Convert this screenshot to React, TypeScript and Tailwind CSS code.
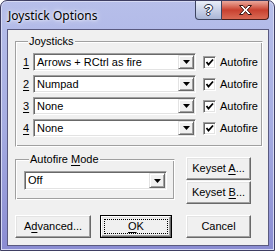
import React from 'react';

const font = "font-['Liberation_Sans',Arial,sans-serif] text-[11px] leading-[13px] text-black";

function U({ children }: { children: React.ReactNode }) {
  return <span className="underline underline-offset-[2px]">{children}</span>;
}

function Arrow() {
  return (
    <svg width="7" height="4" viewBox="0 0 7 4">
      <polygon points="0,0 7,0 3.5,4" fill="black" />
    </svg>
  );
}

function Combo({ value, width, height }: { value: string; width: string; height: string }) {
  return (
    <div
      className={`${width} ${height} flex bg-white border border-t-[#a0a0a0] border-l-[#a0a0a0] border-r-white border-b-white shadow-[inset_1px_1px_0_#696969,inset_-1px_-1px_0_#e3e3e3] p-[1px]`}
    >
      <div className="flex-1 pl-[2px] flex items-center whitespace-nowrap overflow-hidden">{value}</div>
      <div className="w-[16px] bg-[#f0f0f0] flex items-center justify-center border border-t-[#e3e3e3] border-l-[#e3e3e3] border-r-[#696969] border-b-[#696969] shadow-[inset_1px_1px_0_white,inset_-1px_-1px_0_#a0a0a0]">
        <Arrow />
      </div>
    </div>
  );
}

function Check() {
  return (
    <div className="w-[13px] h-[13px] bg-white border border-t-[#a0a0a0] border-l-[#a0a0a0] border-r-white border-b-white shadow-[inset_1px_1px_0_#696969,inset_-1px_-1px_0_#e3e3e3] flex items-center justify-center">
      <svg width="9" height="9" viewBox="0 0 9 9">
        <polyline points="1.5,4 3.5,6.5 8,1.5" fill="none" stroke="black" strokeWidth="1.8" />
      </svg>
    </div>
  );
}

function Btn({ children, width, isDefault }: { children: React.ReactNode; width: string; isDefault?: boolean }) {
  if (isDefault) {
    return (
      <div className={`${width} h-[23px] border border-black`}>
        <div className="h-full bg-[#f0f0f0] border border-t-white border-l-white border-r-[#696969] border-b-[#696969] shadow-[inset_-1px_-1px_0_#a0a0a0,inset_1px_1px_0_#e3e3e3] p-[2px]">
          <div className="h-full border border-dotted border-black flex items-center justify-center">
            <span>{children}</span>
          </div>
        </div>
      </div>
    );
  }
  return (
    <div
      className={`${width} h-[23px] bg-[#f0f0f0] flex items-center justify-center border border-t-white border-l-white border-r-[#696969] border-b-[#696969] shadow-[inset_-1px_-1px_0_#a0a0a0,inset_1px_1px_0_#e3e3e3]`}
    >
      <span className="whitespace-pre">{children}</span>
    </div>
  );
}

const rows = ['Arrows + RCtrl as fire', 'Numpad', 'None', 'None'];

export default function App() {
  return (
    <div className="w-[275px] h-[251px] flex flex-col rounded-t-[7px] border border-[#3e3e62] bg-gradient-to-b from-[#b7bfea] via-[#a6ade2] to-[#8a8cd2] shadow-[inset_0_0_0_1px_#d6daf4]">
      <div className="h-[28px] flex items-start">
        <div className="pl-[7px] pt-[7px] font-['Noto_Sans',sans-serif] text-[12px] leading-[15px] text-black [text-shadow:0_0_6px_#ffffff,0_0_3px_#ffffff]">
          Joystick Options
        </div>
        <div className="ml-auto mr-[5px] flex">
          <div className="w-[27px] h-[19px] rounded-bl-[4px] border border-[#3d4460] border-t-0 bg-gradient-to-b from-[#e9eef8] via-[#c9d2e8] to-[#aab6d6] flex items-center justify-center font-['Liberation_Sans',sans-serif] font-bold text-[14px] leading-none text-white [text-shadow:0_0_1px_#2a2f45,1px_0_0_#2a2f45,-1px_0_0_#2a2f45,0_1px_0_#2a2f45,0_-1px_0_#2a2f45]">
            ?
          </div>
          <div className="w-[47px] h-[19px] rounded-br-[4px] border border-l-0 border-t-0 border-[#4a1e1a] bg-gradient-to-b from-[#e9a89c] via-[#c8402f] to-[#d96a55] flex items-center justify-center">
            <svg width="15" height="12" viewBox="0 0 15 12">
              <path
                d="M1.5 1.5h3.5l2.5 3 2.5-3h3.5l-4.2 4.5 4.2 4.5h-3.5l-2.5-3-2.5 3h-3.5l4.2-4.5z"
                fill="white"
                stroke="#3a1612"
                strokeWidth="1"
              />
            </svg>
          </div>
        </div>
      </div>
      <div className={`ml-[6px] mr-[5px] h-[217px] bg-[#f0f0f0] border border-[#5a5a80] px-[7px] flex flex-col ${font}`}>
        <fieldset className="mt-[5px] w-[248px] border border-t-[#a0a0a0] border-l-[#a0a0a0] border-r-white border-b-white shadow-[inset_1px_1px_0_white,inset_-1px_-1px_0_#a0a0a0] pl-[7px] pt-[5px] pb-[9px]">
          <legend className="ml-[5px] px-[1px] bg-[#f0f0f0]">Joysticks</legend>
          <div className="flex flex-col gap-[4px]">
            {rows.map((r, i) => (
              <div key={i} className="flex items-center">
                <span className="w-[10px]">
                  <U>{i + 1}</U>
                </span>
                <Combo value={r} width="w-[163px]" height="h-[18px]" />
                <div className="ml-[7px]">
                  <Check />
                </div>
                <span className="ml-[4px]">Autofire</span>
              </div>
            ))}
          </div>
        </fieldset>
        <div className="mt-[6px] flex items-start">
          <fieldset className="w-[160px] border border-t-[#a0a0a0] border-l-[#a0a0a0] border-r-white border-b-white shadow-[inset_1px_1px_0_white,inset_-1px_-1px_0_#a0a0a0] pl-[8px] pt-[5px] pb-[9px]">
            <legend className="ml-[5px] px-[1px] bg-[#f0f0f0]">
              Autofire <U>M</U>ode
            </legend>
            <Combo value="Off" width="w-[143px]" height="h-[19px]" />
          </fieldset>
          <div className="ml-[11px] mt-[4px] flex flex-col gap-[1px]">
            <Btn width="w-[65px]">
              Keyset <U>A</U>...
            </Btn>
            <Btn width="w-[65px]">
              Keyset <U>B</U>...
            </Btn>
          </div>
        </div>
        <div className="mt-[11px] flex">
          <Btn width="w-[76px]">
            A<U>d</U>vanced...
          </Btn>
          <div className="ml-[9px]">
            <Btn width="w-[72px]" isDefault>
              <U>O</U>K
            </Btn>
          </div>
          <div className="ml-[14px]">
            <Btn width="w-[65px]">Cancel</Btn>
          </div>
        </div>
      </div>
    </div>
  );
}
